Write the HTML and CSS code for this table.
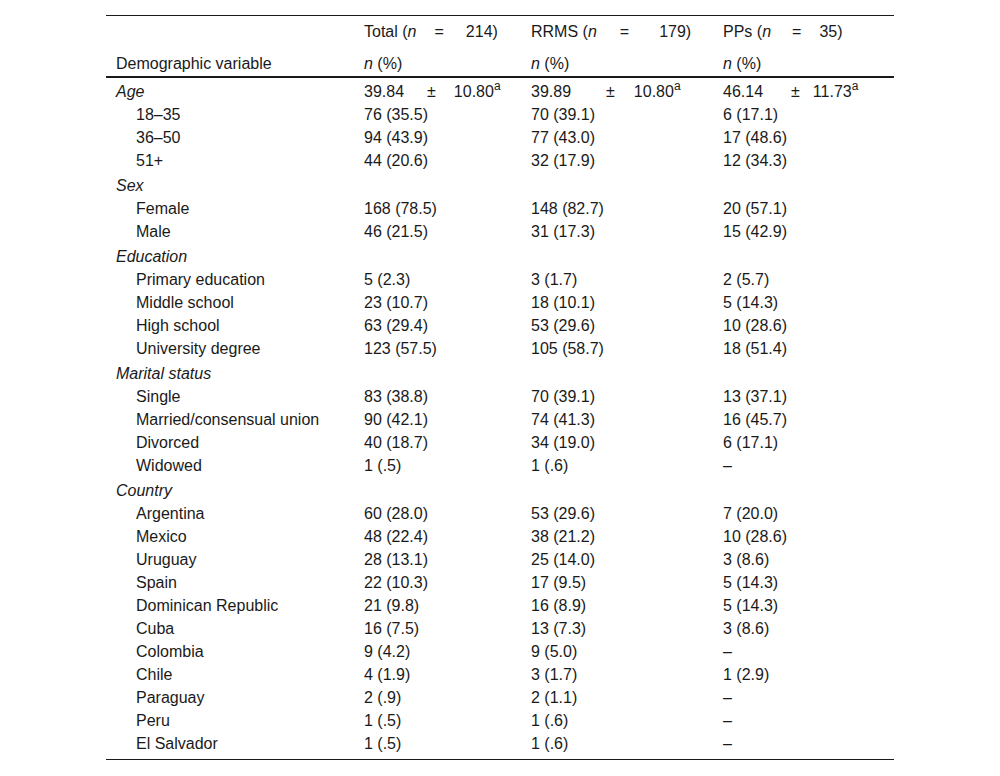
FILE: index.html
```html
<!DOCTYPE html>
<html>
<head>
<meta charset="utf-8">
<link rel="stylesheet" href="styles.css">
</head>
<body>
<div class="wrap">
<table class="tbl">
  <colgroup>
    <col class="c1"><col class="c2"><col class="c3"><col class="c4">
  </colgroup>
  <thead>
    <tr class="h1">
      <th></th>
      <th>Total (<i>n</i><span class="eq eq-tot">=</span>214)</th>
      <th>RRMS (<i>n</i><span class="eq eq-rr">=</span>179)</th>
      <th>PPs (<i>n</i><span class="eq eq-pp">=</span>35)</th>
    </tr>
    <tr class="h2">
      <th>Demographic variable</th>
      <th><i>n</i> (%)</th>
      <th><i>n</i> (%)</th>
      <th><i>n</i> (%)</th>
    </tr>
  </thead>
  <tbody>
    <tr class="sec"><td><i>Age</i></td><td>39.84<span class="pm pm-tot">±</span>10.80<sup>a</sup></td><td>39.89<span class="pm pm-rr">±</span>10.80<sup>a</sup></td><td>46.14<span class="pm pm-pp">±</span>11.73<sup>a</sup></td></tr>
    <tr><td class="ind">18–35</td><td>76 (35.5)</td><td>70 (39.1)</td><td>6 (17.1)</td></tr>
    <tr><td class="ind">36–50</td><td>94 (43.9)</td><td>77 (43.0)</td><td>17 (48.6)</td></tr>
    <tr><td class="ind">51+</td><td>44 (20.6)</td><td>32 (17.9)</td><td>12 (34.3)</td></tr>
    <tr class="sec"><td><i>Sex</i></td><td></td><td></td><td></td></tr>
    <tr><td class="ind">Female</td><td>168 (78.5)</td><td>148 (82.7)</td><td>20 (57.1)</td></tr>
    <tr><td class="ind">Male</td><td>46 (21.5)</td><td>31 (17.3)</td><td>15 (42.9)</td></tr>
    <tr class="sec"><td><i>Education</i></td><td></td><td></td><td></td></tr>
    <tr><td class="ind">Primary education</td><td>5 (2.3)</td><td>3 (1.7)</td><td>2 (5.7)</td></tr>
    <tr><td class="ind">Middle school</td><td>23 (10.7)</td><td>18 (10.1)</td><td>5 (14.3)</td></tr>
    <tr><td class="ind">High school</td><td>63 (29.4)</td><td>53 (29.6)</td><td>10 (28.6)</td></tr>
    <tr><td class="ind">University degree</td><td>123 (57.5)</td><td>105 (58.7)</td><td>18 (51.4)</td></tr>
    <tr class="sec"><td><i>Marital status</i></td><td></td><td></td><td></td></tr>
    <tr><td class="ind">Single</td><td>83 (38.8)</td><td>70 (39.1)</td><td>13 (37.1)</td></tr>
    <tr><td class="ind">Married/consensual union</td><td>90 (42.1)</td><td>74 (41.3)</td><td>16 (45.7)</td></tr>
    <tr><td class="ind">Divorced</td><td>40 (18.7)</td><td>34 (19.0)</td><td>6 (17.1)</td></tr>
    <tr><td class="ind">Widowed</td><td>1 (.5)</td><td>1 (.6)</td><td>–</td></tr>
    <tr class="sec"><td><i>Country</i></td><td></td><td></td><td></td></tr>
    <tr><td class="ind">Argentina</td><td>60 (28.0)</td><td>53 (29.6)</td><td>7 (20.0)</td></tr>
    <tr><td class="ind">Mexico</td><td>48 (22.4)</td><td>38 (21.2)</td><td>10 (28.6)</td></tr>
    <tr><td class="ind">Uruguay</td><td>28 (13.1)</td><td>25 (14.0)</td><td>3 (8.6)</td></tr>
    <tr><td class="ind">Spain</td><td>22 (10.3)</td><td>17 (9.5)</td><td>5 (14.3)</td></tr>
    <tr><td class="ind">Dominican Republic</td><td>21 (9.8)</td><td>16 (8.9)</td><td>5 (14.3)</td></tr>
    <tr><td class="ind">Cuba</td><td>16 (7.5)</td><td>13 (7.3)</td><td>3 (8.6)</td></tr>
    <tr><td class="ind">Colombia</td><td>9 (4.2)</td><td>9 (5.0)</td><td>–</td></tr>
    <tr><td class="ind">Chile</td><td>4 (1.9)</td><td>3 (1.7)</td><td>1 (2.9)</td></tr>
    <tr><td class="ind">Paraguay</td><td>2 (.9)</td><td>2 (1.1)</td><td>–</td></tr>
    <tr><td class="ind">Peru</td><td>1 (.5)</td><td>1 (.6)</td><td>–</td></tr>
    <tr class="last"><td class="ind">El Salvador</td><td>1 (.5)</td><td>1 (.6)</td><td>–</td></tr>
  </tbody>
</table>
</div>
</body>
</html>
```

FILE: styles.css
```css
html, body {
  margin: 0;
  padding: 0;
  background: #fff;
}
body {
  font-family: "Liberation Sans", Arial, sans-serif;
  font-size: 16px;
  color: #1a1a1a;
}
.wrap {
  padding: 15px 106px 0 106px;
}
.tbl {
  width: 788px;
  border-collapse: collapse;
  table-layout: fixed;
  border-top: 1px solid #1a1a1a;
  border-bottom: 1px solid #1a1a1a;
}
.c1 { width: 248px; }
.c2 { width: 167px; }
.c3 { width: 192px; }
.c4 { width: 181px; }
.tbl th, .tbl td {
  text-align: left;
  font-weight: normal;
  padding: 0 10px;
  line-height: 23px;
  vertical-align: top;
  white-space: nowrap;
}
.h1 th {
  padding-top: 4px;
  padding-bottom: 4px;
}
.h2 th {
  padding-top: 5px;
  padding-bottom: 1px;
  border-bottom: 2px solid #1a1a1a;
}
.sec td {
  padding-top: 2px;
}
.last td {
  padding-bottom: 4px;
}
.tbl td.ind {
  padding-left: 30px;
}
.eq, .pm {
  display: inline-block;
}
.eq-tot { margin: 0 22px 0 18px; }
.eq-rr  { margin: 0 30px 0 23px; }
.eq-pp  { margin: 0 18px 0 21px; }
.pm-tot { margin: 0 18px 0 23px; }
.pm-rr  { margin: 0 19px 0 35px; }
.pm-pp  { margin: 0 13px 0 28px; }
sup {
  font-size: 12px;
  line-height: 0;
  vertical-align: 7px;
}
```
